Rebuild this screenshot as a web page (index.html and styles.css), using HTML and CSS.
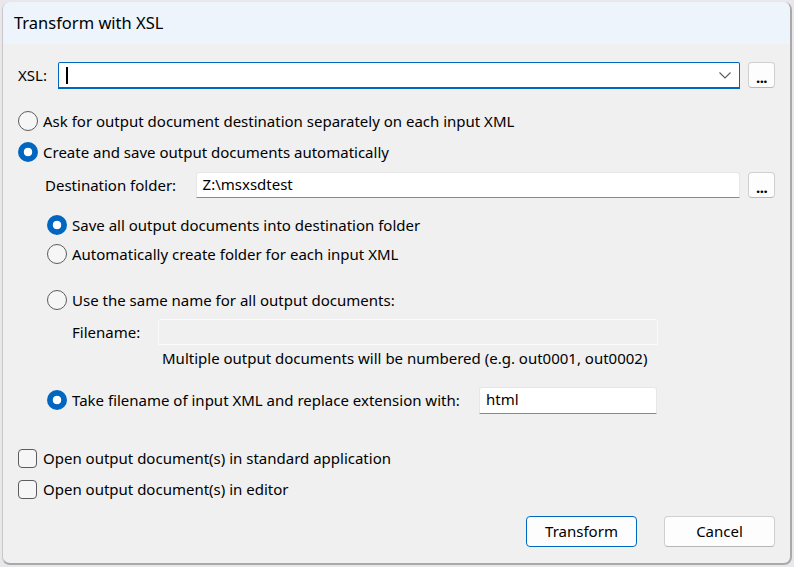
FILE: index.html
```html
<!DOCTYPE html>
<html lang="en">
<head>
<meta charset="utf-8">
<title>Transform with XSL</title>
<link rel="stylesheet" href="styles.css">
</head>
<body>
<div class="window">
  <div class="titlebar">Transform with XSL</div>
  <div class="content">
    <div class="row row-xsl">
      <span class="label-xsl">XSL:</span>
      <div class="combo">
        <span class="caret"></span>
        <svg class="chevron" width="12" height="7" viewBox="0 0 12 7"><path d="M0.5 0.5 L6 6 L11.5 0.5" fill="none" stroke="#5c5c5c" stroke-width="1.1"/></svg>
      </div>
      <div class="dots">...</div>
    </div>

    <div class="row opt r-ask">
      <span class="radio"></span><span class="txt">Ask for output document destination separately on each input XML</span>
    </div>
    <div class="row opt r-create">
      <span class="radio on"></span><span class="txt">Create and save output documents automatically</span>
    </div>

    <div class="row row-dest">
      <span class="label-dest">Destination folder:</span>
      <div class="field dest">Z:\msxsdtest</div>
      <div class="dots">...</div>
    </div>

    <div class="row opt sub r-save">
      <span class="radio on"></span><span class="txt">Save all output documents into destination folder</span>
    </div>
    <div class="row opt sub r-auto">
      <span class="radio"></span><span class="txt">Automatically create folder for each input XML</span>
    </div>

    <div class="row opt sub r-same">
      <span class="radio"></span><span class="txt">Use the same name for all output documents:</span>
    </div>
    <div class="row row-fname">
      <span class="label-fname">Filename:</span>
      <div class="field disabled"></div>
    </div>
    <div class="row row-note">Multiple output documents will be numbered (e.g. out0001, out0002)</div>

    <div class="row opt sub r-take">
      <span class="radio on"></span><span class="txt txt-take">Take filename of input XML and replace extension with:</span>
      <div class="field ext">html</div>
    </div>

    <div class="row opt r-chk1">
      <span class="check"></span><span class="txt">Open output document(s) in standard application</span>
    </div>
    <div class="row opt r-chk2">
      <span class="check"></span><span class="txt">Open output document(s) in editor</span>
    </div>

    <div class="row buttons">
      <div class="btn primary">Transform</div>
      <div class="btn">Cancel</div>
    </div>
  </div>
</div>
</body>
</html>
```

FILE: styles.css
```css
html, body {
  margin: 0;
  padding: 0;
}
body {
  width: 794px;
  height: 567px;
  overflow: hidden;
  background: #e9e6ec;
  font-family: "Noto Sans", "Open Sans", sans-serif;
  font-size: 15px;
  color: #000;
}
.window {
  margin: 2px 0 0 2px;
  width: 790px;
  height: 563px;
  box-sizing: border-box;
  border-right: 2px solid #a9a9a9;
  border-bottom: 2px solid #a9a9a9;
  border-left: 1px solid #c8c8c8;
  border-radius: 8px;
  overflow: hidden;
  background: #f0f0f0;
  display: flex;
  flex-direction: column;
}
.titlebar {
  height: 42px;
  line-height: 42px;
  background: #edf4fb;
  padding-left: 11px;
  font-size: 16.5px;
  flex: none;
}
.content {
  padding: 0 15px 0 15px;
  display: flex;
  flex-direction: column;
}
.row {
  display: flex;
  align-items: center;
  flex: none;
}
.row-xsl { height: 26px; margin-top: 18px; }
.label-xsl { width: 40px; }
.combo {
  position: relative;
  width: 680px;
  height: 24px;
  background: #fff;
  border: 1px solid #0067c0;
  border-bottom: 2px solid #0067c0;
  border-radius: 2px 2px 0 0;
}
.caret {
  position: absolute;
  left: 7px;
  top: 4px;
  width: 2px;
  height: 17px;
  background: #000;
}
.chevron {
  position: absolute;
  right: 8px;
  top: 9px;
}
.dots {
  margin-left: 8px;
  width: 25px;
  height: 24px;
  background: #fdfdfd;
  border: 1px solid #d0d0d0;
  border-bottom-color: #b8b8b8;
  border-radius: 4px;
  text-align: center;
  font-size: 15px;
  line-height: 28px;
  letter-spacing: -0.5px;
  font-weight: bold;
}

.opt { height: 26px; }
.opt .txt { margin-left: 5px; white-space: nowrap; }
.sub { padding-left: 29px; }
.radio {
  width: 18px;
  height: 18px;
  border: 1px solid #5c5c5c;
  border-radius: 50%;
  background: #f6f6f6;
  flex: none;
  box-sizing: content-box;
}
.radio.on {
  width: 20px;
  height: 20px;
  border: none;
  background: radial-gradient(circle, #fff 0 4px, #0067c0 4.6px);
}
.check {
  width: 17px;
  height: 17px;
  border: 1px solid #5c5c5c;
  border-radius: 4px;
  background: #f6f6f6;
  flex: none;
}
.check + .txt { margin-left: 6px; }

.r-ask { margin-top: 20px; }
.r-create { margin-top: 5px; }

.row-dest { height: 26px; margin-top: 7px; }
.label-dest { padding-left: 27px; width: 151px; }
.field {
  height: 25px;
  box-sizing: border-box;
  background: #fff;
  border: 1px solid #e6e6e6;
  border-bottom: 1px solid #8a8a8a;
  border-radius: 3px 3px 0 0;
  padding-left: 6px;
  line-height: 22px;
}
.field.dest { width: 546px; height: 26px; }

.r-save { margin-top: 14px; }
.r-auto { margin-top: 3px; }
.r-same { margin-top: 20px; }

.row-fname { height: 26px; margin-top: 6px; }
.label-fname { padding-left: 54px; width: 86px; }
.field.disabled {
  width: 500px;
  height: 26px;
  background: #f0f0f0;
  border: 1px solid #fbfbfb;
}
.row-note {
  height: 20px;
  margin-top: 3px;
  padding-left: 144px;
}

.r-take { margin-top: 19px; }
.txt-take { width: 407px; }
.field.ext { width: 178px; height: 27px; }

.r-chk1 { margin-top: 32px; }
.r-chk2 { margin-top: 5px; }

.buttons {
  margin-top: 14px;
  justify-content: flex-end;
  padding-right: 0;
}
.btn {
  width: 109px;
  height: 29px;
  background: #fdfdfd;
  border: 1px solid #d0d0d0;
  border-bottom-color: #b5b5b5;
  border-radius: 4px;
  text-align: center;
  line-height: 29px;
  margin-left: 27px;
}
.btn.primary {
  border-color: #0067c0;
}
```
